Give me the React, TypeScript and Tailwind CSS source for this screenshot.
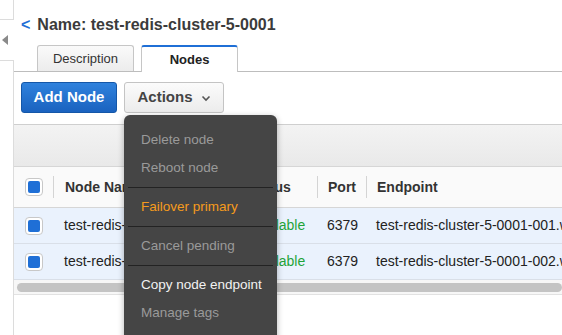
import React from "react";

function Checkbox() {
  return (
    <div className="flex h-[18px] w-[18px] items-center justify-center rounded-[4px] border border-[#c8c8c8] bg-white">
      <div className="h-[12px] w-[12px] rounded-[2px] bg-[#1f6fd6]" />
    </div>
  );
}

const rows = [
  { name: "test-redis-cluster-5-0001-001", endpoint: "test-redis-cluster-5-0001-001.w9jrdq.0001.use1.cache.amazonaws.com" },
  { name: "test-redis-cluster-5-0001-002", endpoint: "test-redis-cluster-5-0001-002.w9jrdq.0001.use1.cache.amazonaws.com" },
];

const menu = [
  { label: "Delete node", tone: "text-[#9a9a9a]" },
  { label: "Reboot node", tone: "text-[#9a9a9a]", sep: true },
  { label: "Failover primary", tone: "text-[#f59b1c]", sep: true },
  { label: "Cancel pending", tone: "text-[#9a9a9a]", sep: true },
  { label: "Copy node endpoint", tone: "text-[#f2f2f2]" },
  { label: "Manage tags", tone: "text-[#9a9a9a]" },
];

export default function App() {
  return (
    <div className="relative flex h-[335px] w-[562px] overflow-hidden bg-white font-['Liberation_Sans',Arial,sans-serif] text-[#222]">
      {/* collapsed side nav */}
      <div className="flex w-[14px] shrink-0 flex-col">
        <div className="h-[20px] border-b border-r border-[#dcdcdc]" />
        <div className="flex h-[40px] items-center pl-[2px]">
          <div className="h-0 w-0 border-y-[5px] border-r-[6px] border-y-transparent border-r-[#8a8a8a]" />
        </div>
        <div className="flex-1 border-r border-t border-[#dcdcdc]" />
      </div>

      <div className="flex min-w-0 flex-1 flex-col overflow-hidden">
        {/* title */}
        <div className="flex h-[46px] shrink-0 items-center gap-[7px] pl-[7px] pt-[4px]">
          <span className="text-[16px] font-bold text-[#1f6fd6]">&lt;</span>
          <span className="whitespace-nowrap text-[16px] font-bold text-[#3b3b3b]">Name: test-redis-cluster-5-0001</span>
        </div>

        {/* tabs */}
        <div className="flex h-[26px] shrink-0 items-end gap-[7px] border-b border-[#bdbdbd] pl-[23px]">
          <div className="flex h-[26px] w-[97px] items-center justify-center rounded-t-[3px] border border-b-0 border-[#c6c6c6] bg-gradient-to-b from-[#fafafa] to-[#ececec] text-[13px] text-[#333]">
            Description
          </div>
          <div className="-mb-px flex h-[27px] w-[97px] items-center justify-center rounded-t-[3px] border-x border-t-2 border-x-[#c6c6c6] border-t-[#1f6fd6] bg-white text-[13px] font-bold text-[#222]">
            Nodes
          </div>
        </div>

        {/* toolbar */}
        <div className="flex h-[53px] shrink-0 items-start gap-[7px] border-b border-[#cfcfcf] pl-[7px] pt-[10px]">
          <button className="h-[31px] w-[96px] rounded-[3px] border border-[#1457a8] bg-gradient-to-b from-[#2f82dd] to-[#1a62bf] text-[15px] font-bold text-white">
            Add Node
          </button>
          <button className="flex h-[31px] w-[100px] items-center justify-center gap-[8px] rounded-[3px] border border-[#c4c4c4] bg-gradient-to-b from-[#fbfbfb] to-[#ececec] text-[15px] font-bold text-[#444]">
            Actions
            <svg width="10" height="7" viewBox="0 0 10 7" className="mt-[1px]">
              <path d="M1.5 1.5 L5 5 L8.5 1.5" fill="none" stroke="#555" strokeWidth="1.6" />
            </svg>
          </button>
        </div>

        {/* filter band */}
        <div className="h-[42px] shrink-0 border-b border-[#d6d6d6] bg-gradient-to-b from-[#f3f3f3] to-[#e9e9e9]" />

        {/* table header */}
        <div className="flex h-[41px] shrink-0 items-center whitespace-nowrap border-b border-[#d6d6d6] bg-[#fafafa] text-[14px] font-bold text-[#333]">
          <div className="flex w-[39px] shrink-0 justify-center pl-[1px]">
            <Checkbox />
          </div>
          <div className="h-[22px] w-px shrink-0 bg-[#d4d4d4]" />
          <div className="w-[186px] shrink-0 pl-[11px]">Node Name</div>
          <div className="w-[77px] shrink-0 pl-[8px]">Status</div>
          <div className="h-[22px] w-px shrink-0 bg-[#d4d4d4]" />
          <div className="w-[48px] shrink-0 pl-[10px]">Port</div>
          <div className="h-[22px] w-px shrink-0 bg-[#d4d4d4]" />
          <div className="shrink-0 pl-[10px]">Endpoint</div>
        </div>

        {rows.map((r) => (
          <div
            key={r.name}
            className="flex h-[36px] shrink-0 items-center whitespace-nowrap border-b border-[#d9dfe8] bg-[#eaf2fd] text-[14px] text-[#222]"
          >
            <div className="flex w-[39px] shrink-0 justify-center pl-[1px]">
              <Checkbox />
            </div>
            <div className="w-[187px] shrink-0 overflow-hidden pl-[11px]">{r.name}</div>
            <div className="w-[77px] shrink-0 pl-[10px] text-[#1fa43a]">available</div>
            <div className="w-[49px] shrink-0 pl-[10px]">6379</div>
            <div className="shrink-0 pl-[10px]">{r.endpoint}</div>
          </div>
        ))}

        {/* horizontal scrollbar */}
        <div className="flex h-[15px] shrink-0 items-center border-b border-[#e2e2e2] bg-[#f7f7f7] pl-[3px]">
          <div className="h-[9px] flex-1 rounded-full bg-[#c4c4c4]" />
        </div>
      </div>

      {/* actions menu */}
      <div className="absolute left-[124px] top-[115px] w-[153px] rounded-[6px] bg-[#454545] pb-[20px] pt-[11px] text-[13.5px] shadow-[0_2px_6px_rgba(0,0,0,0.3)]">
        {menu.map((m) => (
          <div key={m.label}>
            <div className={`flex h-[28px] items-center pl-[17px] ${m.tone}`}>{m.label}</div>
            {m.sep && <div className="mx-[4px] my-[5px] h-px bg-[#232323]" />}
          </div>
        ))}
      </div>
    </div>
  );
}
